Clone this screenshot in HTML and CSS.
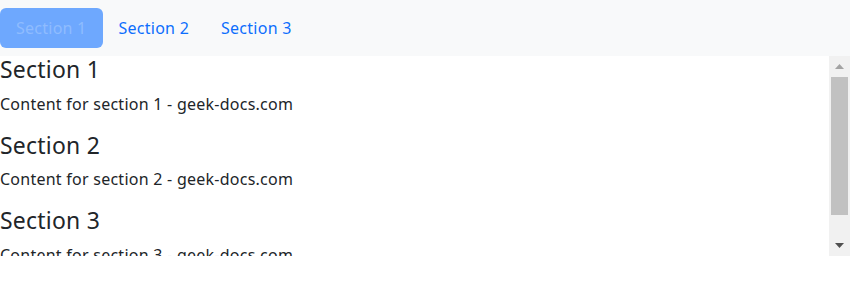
FILE: index.html
```html
<!DOCTYPE html>
<html lang="en">
<head>
<meta charset="utf-8">
<title>Scrollspy</title>
<link rel="stylesheet" href="styles.css">
</head>
<body>
<nav class="navbar">
  <ul class="nav">
    <li><a class="nav-link active" href="#section1">Section 1</a></li>
    <li><a class="nav-link" href="#section2">Section 2</a></li>
    <li><a class="nav-link" href="#section3">Section 3</a></li>
  </ul>
</nav>
<div class="spy">
  <div class="spy-content">
    <div class="section" id="section1">
      <h4>Section 1</h4>
      <p>Content for section 1 - geek-docs.com</p>
    </div>
    <div class="section" id="section2">
      <h4>Section 2</h4>
      <p>Content for section 2 - geek-docs.com</p>
    </div>
    <div class="section" id="section3">
      <h4>Section 3</h4>
      <p>Content for section 3 - geek-docs.com</p>
    </div>
  </div>
  <div class="scrollbar" aria-hidden="true">
    <div class="sb-btn">
      <svg width="9" height="5" viewBox="0 0 9 5"><polygon points="0,5 9,5 4.5,0" fill="#a3a3a3"/></svg>
    </div>
    <div class="sb-track"><div class="sb-thumb"></div></div>
    <div class="sb-btn">
      <svg width="9" height="5" viewBox="0 0 9 5"><polygon points="0,0 9,0 4.5,5" fill="#505050"/></svg>
    </div>
  </div>
</div>
</body>
</html>
```
FILE: styles.css
```css
* { box-sizing: border-box; }
html, body { margin: 0; padding: 0; }
body {
  font-family: "Noto Sans", "Open Sans", sans-serif;
  font-size: 16px;
  line-height: 1.5;
  letter-spacing: 0.25px;
  color: #212529;
  background: #fff;
}
.navbar {
  background: #f8f9fa;
  padding: 8px 0;
}
.nav {
  display: flex;
  list-style: none;
  margin: 0;
  padding: 0;
}
.nav-link {
  display: block;
  padding: 8px 16px;
  color: #0d6efd;
  text-decoration: none;
  border-radius: 6px;
}
.nav-link.active {
  background: #6ea8fe;
  color: #8fbcfe;
}
.spy {
  display: flex;
  height: 200px;
}
.spy-content {
  flex: 1;
  overflow: hidden;
}
h4 {
  margin: 0 0 8px;
  font-size: 22.95px;
  font-weight: 400;
  line-height: 1.2;
}
p { margin: 0 0 16px; }
.scrollbar {
  width: 21px;
  display: flex;
  flex-direction: column;
  background: #f1f1f1;
}
.sb-btn {
  height: 21px;
  display: flex;
  align-items: center;
  justify-content: center;
}
.sb-btn svg { display: block; }
.sb-track {
  flex: 1;
  padding: 0 2px;
}
.sb-thumb {
  height: 138px;
  background: #c1c1c1;
}
```
